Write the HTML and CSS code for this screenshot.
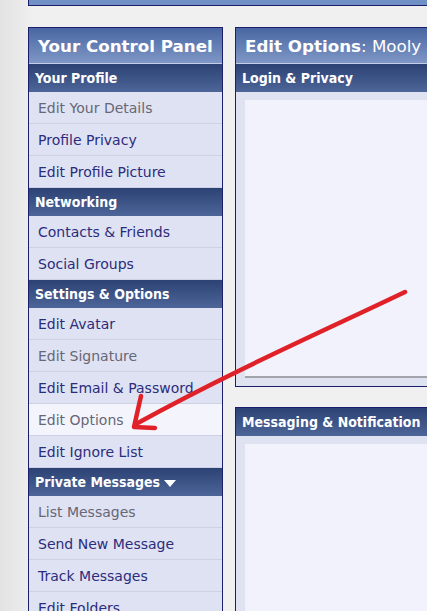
FILE: index.html
```html
<!DOCTYPE html>
<html lang="en">
  <head>
    <meta charset="UTF-8" />
    <title>Edit Options</title>
    <link rel="stylesheet" href="styles.css">
  </head>
  <body>
    <div class="topbar"></div>

    <div class="layout">
      <div class="sidebar">
        <div class="panel-head">Your Control Panel</div>

        <div class="section-head">Your Profile</div>
        <a class="item visited" href="#">Edit Your Details</a>
        <a class="item" href="#">Profile Privacy</a>
        <a class="item" href="#">Edit Profile Picture</a>

        <div class="section-head">Networking</div>
        <a class="item" href="#">Contacts &amp; Friends</a>
        <a class="item" href="#">Social Groups</a>

        <div class="section-head">Settings &amp; Options</div>
        <a class="item" href="#">Edit Avatar</a>
        <a class="item visited" href="#">Edit Signature</a>
        <a class="item" href="#">Edit Email &amp; Password</a>
        <a class="item visited current" href="#">Edit Options</a>
        <a class="item" href="#">Edit Ignore List</a>

        <div class="section-head">Private Messages <span class="caret"></span></div>
        <a class="item visited" href="#">List Messages</a>
        <a class="item" href="#">Send New Message</a>
        <a class="item" href="#">Track Messages</a>
        <a class="item" href="#">Edit Folders</a>
      </div>

      <div class="main">
        <div class="panel first">
          <div class="panel-head"><b>Edit Options</b>: Mooly</div>
          <div class="section-head">Login &amp; Privacy</div>
          <div class="panel-body">
            <div class="box tall"></div>
          </div>
        </div>

        <div class="panel">
          <div class="section-head">Messaging &amp; Notification</div>
          <div class="panel-body">
            <div class="box"></div>
          </div>
        </div>
      </div>
    </div>

    <svg class="annotation" width="427" height="611" viewBox="0 0 427 611">
      <path d="M405 292 C 330 328, 230 372, 136 424" />
      <path d="M141 396 L 134 427 L 155 428" />
    </svg>
  </body>
</html>
```

FILE: styles.css
```css
* {
  box-sizing: border-box;
}

body {
  margin: 0;
  width: 427px;
  height: 611px;
  overflow: hidden;
  font-family: "DejaVu Sans", Verdana, sans-serif;
  background: linear-gradient(to right, #e3e3e3 0, #e9e9e9 18px, #f0f0f0 34px);
  position: relative;
}

.topbar {
  margin-left: 28px;
  height: 6px;
  background-color: #7090c6;
  border-left: 1px solid #1b1e6b;
  border-bottom: 1px solid #1b1e6b;
}

.layout {
  display: flex;
  gap: 12px;
  padding: 21px 0 0 28px;
}

.sidebar {
  width: 195px;
  flex: none;
  border: 1px solid #1b1e6b;
  border-bottom: none;
  display: flex;
  flex-direction: column;
}

.panel-head {
  height: 36px;
  display: flex;
  align-items: center;
  padding-left: 9px;
  color: white;
  font-size: 16.7px;
  font-weight: bold;
  white-space: nowrap;
  background: linear-gradient(to bottom, #4966a2, #7f97c6);
  border-bottom: 1px solid #c3cde6;
}

.panel-head b {
  font-weight: bold;
}

.main .panel-head {
  font-weight: normal;
}

.section-head {
  height: 28px;
  display: flex;
  align-items: center;
  gap: 4px;
  padding-left: 6px;
  color: white;
  font-family: "DejaVu Sans Condensed", "DejaVu Sans", sans-serif;
  font-size: 14px;
  font-weight: bold;
  white-space: nowrap;
  background: linear-gradient(to bottom, #2c4275, #4d6598);
}

.caret {
  width: 0;
  height: 0;
  margin-top: 2px;
  border-left: 6px solid transparent;
  border-right: 6px solid transparent;
  border-top: 7px solid white;
}

.item {
  height: 32px;
  display: flex;
  align-items: center;
  padding-left: 9px;
  font-size: 14px;
  color: #2c2c7c;
  text-decoration: none;
  white-space: nowrap;
  background-color: #dfe2f2;
  border-bottom: 1px solid #ccd1e6;
}

.item.visited {
  color: #676775;
}

.item.current {
  background-color: #f4f5fc;
}

.main {
  width: 230px;
  flex: none;
  display: flex;
  flex-direction: column;
  gap: 20px;
}

.panel {
  border: 1px solid #1b1e6b;
  border-right: none;
}

.panel-body {
  background-color: #dfe2f1;
  padding: 8px 0 8px 9px;
}

.box {
  height: 200px;
  background-color: #f1f2fc;
}

.box.tall {
  height: 278px;
  border-bottom: 2px solid #a2a3ab;
}

.annotation {
  position: absolute;
  left: 0;
  top: 0;
  pointer-events: none;
}

.annotation path {
  fill: none;
  stroke: #e02128;
  stroke-width: 4.5;
  stroke-linecap: round;
  stroke-linejoin: round;
}
```
